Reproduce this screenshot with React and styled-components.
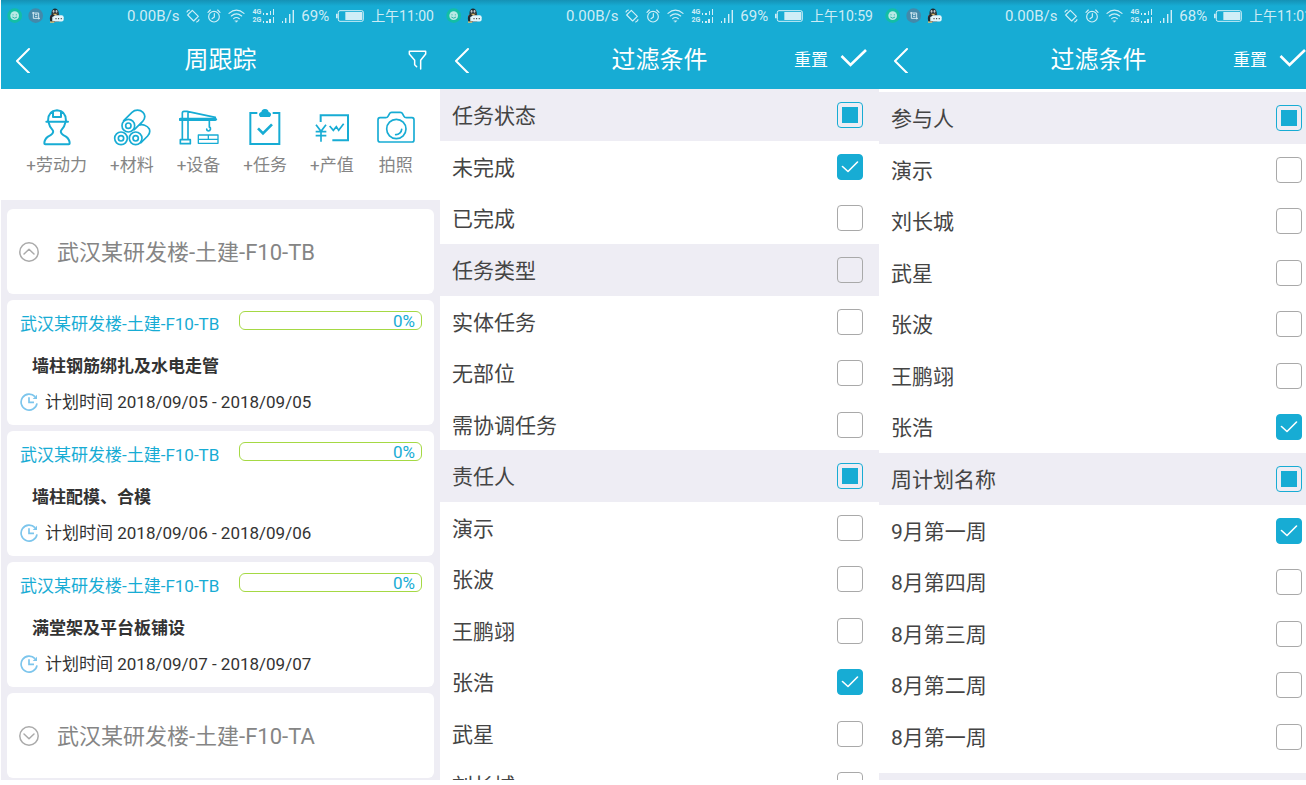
import React, {useEffect, useRef} from "react";
import styled, {createGlobalStyle, ThemeProvider} from "styled-components";

const theme = {
  primary: "#17acd4",
  sky: "#7cc5ec",
  lime: "#a5d944",
  mist: "#eeedf4",
  ink: "#444",
  dark: "#333",
  grey: "#858585",
  border: "#a9a9a9",
};

const GlobalStyle = createGlobalStyle`
  * {
    box-sizing: border-box;
  }

  body {
    margin: 0;
    background: white;
    overflow: hidden;
    font-family: Roboto, "Noto Sans CJK SC", sans-serif;
  }

  button {
    padding: 0;
    border: 0;
    background: none;
    color: inherit;
    font: inherit;
    cursor: pointer;
  }

  svg {
    display: block;
    flex: none;
  }
`;

/* the last screen runs slightly past the right edge of the window */
const Board = styled.main`
  display: grid;
  grid-template-columns: repeat(3, minmax(0, 1fr));
  height: calc(100vh - 5px);
  margin-left: 1px;
  margin-right: -12px;
`;

const Screen = styled.section`
  display: flex;
  flex-direction: column;
  overflow: hidden;
  background: ${props => props.tinted ? props.theme.mist : "white"};
`;

const TopBar = styled.header`
  flex: none;
  color: white;
  background: linear-gradient(#1591b5, ${props => props.theme.primary} 6px);
`;

const StatusBar = styled.div`
  display: flex;
  align-items: center;
  justify-content: space-between;
  height: 31px;
  padding: 0 6px;
  font-size: 15px;
  line-height: 20px;
  color: rgba(255, 255, 255, 0.8);
`;

const StatusGroup = styled.div`
  display: flex;
  align-items: center;
  gap: ${props => props.gap}px;
  white-space: nowrap;
`;

const Time = styled.span`
  font-size: 14px;
`;

const Networks = styled.span`
  display: grid;
  font-size: 7px;
  font-weight: 700;
  line-height: 8px;
`;

const NavBar = styled.div`
  display: grid;
  grid-template-columns: 1fr auto 1fr;
  align-items: center;
  height: 58px;
  padding: 0 12px;
`;

const Title = styled.h1`
  margin: 0;
  font-size: 24px;
  font-weight: 400;
  line-height: 34px;
`;

const NavActions = styled.div`
  display: flex;
  align-items: center;
  justify-content: flex-end;
  gap: 12px;
  font-size: 17px;
  line-height: 24px;
`;

const Actions = styled.nav`
  display: flex;
  justify-content: center;
  gap: 23px;
  flex: none;
  padding: 19px 0 23px;
  background: white;
`;

const Action = styled.button`
  display: flex;
  flex-direction: column;
  align-items: center;
  gap: 7px;

  && {
    color: ${props => props.theme.grey};
    font-size: 17px;
    line-height: 24px;
  }
`;

const Cards = styled.div`
  display: flex;
  flex-direction: column;
  gap: 6px;
  padding: 9px 6px;
`;

const Card = styled.article`
  flex: none;
  padding: 11px 12px 11px 13px;
  border-radius: 6px;
  background: white;
`;

const Building = styled.button`
  display: flex;
  align-items: center;
  flex: none;
  gap: 18px;
  height: 85px;

  && {
    padding: 0 12px;
    border-radius: 6px;
    background: white;
    color: ${props => props.theme.grey};
    font-size: 22px;
  }
`;

const Lifted = styled.span`
  padding-bottom: ${props => props.by || 2}px;
`;

const CardTop = styled.div`
  display: flex;
  gap: 20px;
  height: 24px;
  line-height: 26px;
`;

const BuildingLink = styled.a`
  flex: none;
  color: ${props => props.theme.primary};
  font-size: 17px;
  text-decoration: none;
`;

const Progress = styled.div`
  position: relative;
  flex: 1;
  height: 19px;
  border: 1px solid ${props => props.theme.lime};
  border-radius: 6px;
  padding-right: 6px;
  color: ${props => props.theme.primary};
  font-size: 17px;
  line-height: 19px;
  text-align: right;
`;

const ProgressFill = styled.span`
  position: absolute;
  top: 0;
  bottom: 0;
  left: 0;
  border-radius: 5px;
  background: ${props => props.theme.lime};
`;

const TaskName = styled.h2`
  margin: 19px 0 12px 12px;
  color: ${props => props.theme.dark};
  font-size: 17px;
  font-weight: 700;
  line-height: 24px;
`;

const Plan = styled.div`
  display: flex;
  align-items: center;
  gap: 7px;
  color: ${props => props.theme.dark};
  font-size: 17px;
  line-height: 24px;
`;

const Filters = styled.form`
  padding-top: ${props => props.offset ? 3 : 0}px;
`;

const FilterGroup = styled.div`
  display: flex;
  flex-direction: column;
`;

const Row = styled.label`
  display: flex;
  align-items: center;
  justify-content: space-between;
  height: 52px;
  padding: 0 16px 0 12px;
  color: ${props => props.theme.ink};
  background: ${props => props.heading ? props.theme.mist : "white"};
  font-size: 21px;

  &:nth-child(even) {
    height: 51px;
  }
`;

const NextGroup = styled.div`
  height: 52px;
  margin-top: 11px;
  background: ${props => props.theme.mist};
`;

const Box = styled.span`
  display: grid;
  place-items: center;

  > * {
    grid-area: 1 / 1;
  }

  > svg {
    pointer-events: none;
  }
`;

const Tick = styled.input`
  appearance: none;
  width: 26px;
  height: 26px;
  margin: 0;
  border: 1px solid ${props => props.theme.border};
  border-radius: 4px;

  &:checked {
    border-color: ${props => props.theme.primary};
    background: ${props => props.theme.primary};
  }

  &:indeterminate {
    border-color: ${props => props.theme.primary};
    background: ${props => props.theme.primary} content-box;
    padding: 4px;
  }
`;

const Stroke = ({weight = 5, children, ...props}) => (
  <svg
    fill="none"
    stroke="currentColor"
    strokeWidth={weight}
    strokeLinecap="round"
    strokeLinejoin="round"
    aria-hidden="true"
    {...props}
  >
    {children}
  </svg>
);

const WorkerIcon = () => (
  <Stroke weight="6" viewBox="108 52 114 114" height="38" color={theme.primary}>
    <path d="M138 91C138 70 148 60 165 59C182 60 192 70 192 91M133 93H198M153 63V79H177V63" />
    <path d="M140 96C142 108 149 116 153 120C156 127 150 132 138 138C130 144 127 149 127 158Q127 161 130 161H200Q203 161 203 158C203 149 200 144 192 138C180 132 174 127 177 120C181 116 188 108 190 96" />
  </Stroke>
);

const PipesIcon = () => (
  <Stroke viewBox="336 52 114 114" height="38" color={theme.primary}>
    <circle cx="382" cy="105" r="19" />
    <circle cx="382" cy="105" r="8" />
    <circle cx="360" cy="143" r="19" />
    <circle cx="360" cy="143" r="8" />
    <circle cx="404" cy="143" r="19" />
    <circle cx="404" cy="143" r="8" />
    <path d="M368 90L393 65C402 56 417 56 426 65C434 74 432 84 425 92L400 117M413 104C424 99 439 104 445 115C448 124 445 131 440 136L420 156" />
  </Stroke>
);

const CraneIcon = () => (
  <Stroke viewBox="534 52 120 114" height="38" color={theme.primary}>
    <path d="M544 90V146M561 90V146M538 147H568V159H538ZM544 82V67Q544 62 549 62H558L643 80M561 64V82M625 92V110M625 108C631 111 629 121 622 121Q617 120 617 115" />
    <path d="M538 86H643" strokeWidth="10" />
    <path d="M592 133H651V158H592ZM592 146H651M622 133V146" strokeWidth="4" />
  </Stroke>
);

const TaskIcon = () => (
  <Stroke weight="6" viewBox="78 52 114 114" height="38" color={theme.primary} strokeLinecap="butt" strokeLinejoin="miter">
    <path d="M112 67H91V160H178V67H158" />
    <path d="M122 76C117 71 121 66 127 66C127 55 143 55 143 66C149 66 153 71 148 76Z" fill="currentColor" />
    <path d="M114 113L129 128L156 101" strokeWidth="8" />
  </Stroke>
);

const ValueIcon = () => (
  <Stroke weight="6" viewBox="280 52 114 114" height="38" color={theme.primary} strokeLinecap="butt" strokeLinejoin="miter">
    <path d="M303 94V74H385V149H338" />
    <path d="M289 102L304 122L319 102M304 122V153M288 123H320M288 135H320M330 106L341 119L350 108L357 119L372 99" strokeWidth="5" />
  </Stroke>
);

const CameraIcon = () => (
  <Stroke viewBox="472 52 114 114" height="38" color={theme.primary}>
    <path d="M481 81H498Q503 81 505 77L509 70Q511 65 516 65H542Q547 65 549 70L553 77Q555 81 560 81H577Q583 81 583 88V147Q583 154 577 154H482Q475 154 475 147V88Q475 81 481 81Z" />
    <circle cx="530" cy="115" r="29" />
    <path d="M546 116A17 17 0 0 1 528 132" />
  </Stroke>
);

const CircleChevron = ({open}) => (
  <Stroke weight="1.5" viewBox="0 0 20 20" width="20" height="20" color="#aaa">
    <circle cx="10" cy="10" r="9.2" />
    <path d={open ? "M5 12L10 7.3L15 12" : "M5 8L10 12.7L15 8"} />
  </Stroke>
);

const ClockIcon = () => (
  <svg viewBox="0 0 54 54" width="18" height="18" fill="none" stroke={theme.sky} strokeWidth="5" aria-hidden="true">
    <path d="M45 11A24 24 0 1 0 51 31M27 13V28H42" />
    <path d="M51 5V18H38Z" fill={theme.sky} stroke="none" />
  </svg>
);

const MessengerIcon = () => (
  <svg viewBox="146 23 46 45" width="15" height="15" aria-hidden="true">
    <path d="M149 46L161 38L165 66L151 63Z" fill="#a8424a" />
    <path d="M151 65C147 56 148 49 154 43C150 18 178 18 176 43C184 50 181 57 177 64Z" fill="#222a30" />
    <path d="M156 50Q164 45 168 51L166 63H156Z" fill="#d6eef5" />
    <ellipse cx="160" cy="33" rx="3" ry="4" fill="#b9c4c8" />
    <ellipse cx="169" cy="33" rx="3" ry="4" fill="#b9c4c8" />
    <path d="M156 40H174L165 45ZM149 64H162V68H149Z" fill="#e8c26a" />
    <rect x="160" y="45" width="31" height="19" rx="6" fill="#e4f5fa" />
    <path d="M166 53H169V57H166ZM174 53H177V57H174ZM182 53H185V57H182Z" fill="#333" />
  </svg>
);

const NoticeIcons = ({capture}) => (
  <StatusGroup gap={6}>
    <svg viewBox="0 0 45 45" width="15" height="15" aria-hidden="true">
      <circle cx="23" cy="23" r="22" fill="#13bea5" />
      <circle cx="23" cy="23" r="13" fill="#b9e9e4" />
      <path d="M18 19V22M28 19V22M16 27Q23 34 30 27" fill="none" stroke="#2db9a9" strokeWidth="3" />
    </svg>
    {capture && (
      <svg viewBox="0 0 45 45" width="15" height="15" aria-hidden="true">
        <circle cx="23" cy="23" r="22" fill="#4389aa" />
        <path d="M12 15H32V34M16 12V31H36M21 19H28M21 25H28" fill="none" stroke="#d3e9f1" strokeWidth="3" />
      </svg>
    )}
    <MessengerIcon />
  </StatusGroup>
);

const PhoneStatus = ({battery, time, capture}) => (
  <StatusBar>
    <NoticeIcons capture={capture} />
    <StatusGroup gap={7}>
      <span>0.00B/s</span>
      <Stroke weight="3.5" viewBox="0 0 42 42" width="14" height="14">
        <path d="M19 4L37 22L23 36L5 18ZM3 9Q5 4 10 3M39 32Q37 37 32 39" />
      </Stroke>
      <Stroke weight="3.5" viewBox="0 0 42 42" width="14" height="14">
        <circle cx="21" cy="23" r="16" />
        <path d="M22 14V24L15 29M3 10L10 3M39 10L32 3" />
      </Stroke>
      <Stroke weight="3.5" viewBox="0 0 51 42" width="17" height="14">
        <path d="M3 13Q25 -6 48 13M10 21Q25 8 41 21M17 29Q25 22 34 29" />
        <path d="M21 35H30L25 40Z" fill="currentColor" strokeWidth="1" />
      </Stroke>
      <StatusGroup gap={2}>
        <Networks><span>4G</span><span>2G</span></Networks>
        <svg viewBox="0 0 12 16" width="12" height="16" fill="currentColor" aria-hidden="true">
          <path d="M0 5h1v2H0zM3 5h2v2H3zM7 3h1v4H7zM10 1h1v6h-1zM0 13h1v2H0zM3 13h2v2H3zM6 11h2v4H6zM10 9h1v6h-1z" />
        </svg>
      </StatusGroup>
      <svg viewBox="0 0 12 14" width="12" height="14" fill="currentColor" aria-hidden="true">
        <path d="M0 12h1v2H0zM3 9h1.4v5H3zM7 5h1.4v9H7zM10.6 1H12v13h-1.4z" />
      </svg>
      <span>{battery}%</span>
      <svg viewBox="0 0 84 36" width="28" height="12" fill="currentColor" aria-hidden="true">
        <rect x="7" y="2" width="75" height="32" rx="5" fill="none" stroke="currentColor" strokeWidth="3" />
        <path d="M0 11H5V25H0ZM28 6H79V30H28Z" />
      </svg>
      <Time>{time}</Time>
    </StatusGroup>
  </StatusBar>
);

const BackButton = () => (
  <button type="button" aria-label="返回">
    <Stroke weight="2" viewBox="0 0 18 26" width="18" height="26">
      <path d="M16 2L4 14L16 26" />
    </Stroke>
  </button>
);

const FilterTop = (props) => (
  <TopBar>
    <PhoneStatus {...props} />
    <NavBar>
      <BackButton />
      <Title>过滤条件</Title>
      <NavActions>
        <button type="button"><Lifted>重置</Lifted></button>
        <button type="button" aria-label="确定">
          <Stroke weight="2.6" viewBox="0 0 27 24" width="27" height="24" strokeLinecap="butt" strokeLinejoin="miter">
            <path d="M1.5 8L10.5 17L26 2" />
          </Stroke>
        </button>
      </NavActions>
    </NavBar>
  </TopBar>
);

const Option = ({name, checked, partial, heading}) => {
  const input = useRef(null);

  useEffect(() => {
    input.current.indeterminate = Boolean(partial);
  }, [partial]);

  return (
    <Row heading={heading ? 1 : undefined}>
      <Lifted>{name}</Lifted>
      <Box>
        <Tick ref={input} type="checkbox" defaultChecked={checked} />
        {checked && (
          <Stroke weight="1.6" viewBox="0 0 18 12" width="18" height="12" color="white">
            <path d="M1.5 5.5L7 10.5L16.5 1" />
          </Stroke>
        )}
      </Box>
    </Row>
  );
};

const Group = ({title, partial, items, selected}) => (
  <FilterGroup role="group" aria-label={title}>
    <Option name={title} partial={partial} heading />
    {items.map(item => <Option key={item} name={item} checked={item === selected} />)}
  </FilterGroup>
);

const actions = [
  ["+劳动力", WorkerIcon],
  ["+材料", PipesIcon],
  ["+设备", CraneIcon],
  ["+任务", TaskIcon],
  ["+产值", ValueIcon],
  ["拍照", CameraIcon],
];

const tasks = [
  {name: "墙柱钢筋绑扎及水电走管", date: "2018/09/05", progress: 0},
  {name: "墙柱配模、合模", date: "2018/09/06", progress: 0},
  {name: "满堂架及平台板铺设", date: "2018/09/07", progress: 0},
];

const TaskCard = ({task}) => (
  <Card>
    <CardTop>
      <BuildingLink href="#building">武汉某研发楼-土建-F10-TB</BuildingLink>
      <Progress role="progressbar" aria-label={task.name} aria-valuenow={task.progress}>
        <ProgressFill style={{width: `${task.progress}%`}} />
        {task.progress}%
      </Progress>
    </CardTop>
    <TaskName>{task.name}</TaskName>
    <Plan>
      <ClockIcon />
      <span>计划时间 {task.date} - {task.date}</span>
    </Plan>
  </Card>
);

const TrackingScreen = () => (
  <Screen tinted={1}>
    <TopBar>
      <PhoneStatus battery={69} time="上午11:00" capture />
      <NavBar>
        <BackButton />
        <Title>周跟踪</Title>
        <NavActions>
          <button type="button" aria-label="筛选">
            <Stroke weight="4.5" viewBox="0 0 60 60" width="20" height="20">
              <path d="M4 4H53V12L38 31V57M26 50L20 44V31L4 12V4" />
            </Stroke>
          </button>
        </NavActions>
      </NavBar>
    </TopBar>
    <Actions>
      {actions.map(([label, Icon]) => (
        <Action type="button" key={label}>
          <Icon />
          {label}
        </Action>
      ))}
    </Actions>
    <Cards>
      <Building type="button" aria-expanded="true">
        <CircleChevron open />
        <Lifted by={4}>武汉某研发楼-土建-F10-TB</Lifted>
      </Building>
      {tasks.map(task => <TaskCard key={task.date} task={task} />)}
      <Building type="button" aria-expanded="false">
        <CircleChevron />
        <Lifted by={4}>武汉某研发楼-土建-F10-TA</Lifted>
      </Building>
    </Cards>
  </Screen>
);

const App = () => (
  <ThemeProvider theme={theme}>
    <GlobalStyle />
    <Board>
      <TrackingScreen />
      <Screen>
        <FilterTop battery={69} time="上午10:59" />
        <Filters>
          <Group title="任务状态" partial items={["未完成", "已完成"]} selected="未完成" />
          <Group title="任务类型" items={["实体任务", "无部位", "需协调任务"]} />
          <Group
            title="责任人"
            partial
            items={["演示", "张波", "王鹏翊", "张浩", "武星", "刘长城"]}
            selected="张浩"
          />
        </Filters>
      </Screen>
      <Screen>
        <FilterTop battery={68} time="上午11:01" capture />
        <Filters offset={1}>
          <Group
            title="参与人"
            partial
            items={["演示", "刘长城", "武星", "张波", "王鹏翊", "张浩"]}
            selected="张浩"
          />
          <Group
            title="周计划名称"
            partial
            items={["9月第一周", "8月第四周", "8月第三周", "8月第二周", "8月第一周"]}
            selected="9月第一周"
          />
          <NextGroup />
        </Filters>
      </Screen>
    </Board>
  </ThemeProvider>
);

export default App;
